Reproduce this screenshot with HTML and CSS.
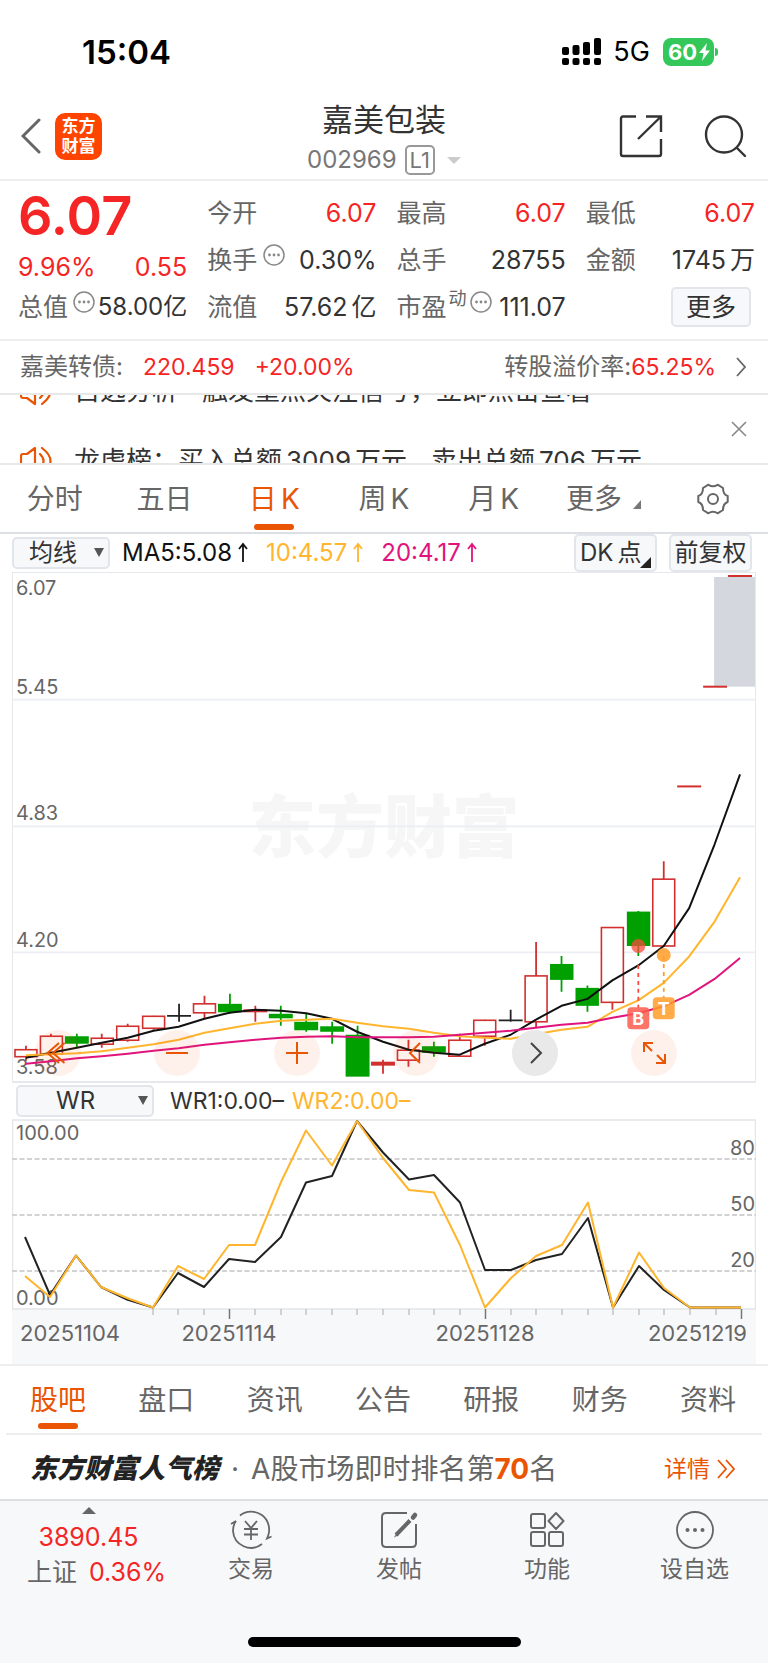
FILE: index.html
```html
<!DOCTYPE html>
<html lang="zh-CN">
<head>
<meta charset="utf-8">
<meta name="viewport" content="width=device-width, initial-scale=1">
<title>嘉美包装 002969</title>
<link rel="stylesheet" href="styles.css">
</head>
<body>
<svg class="defs" width="0" height="0" aria-hidden="true">
  <symbol id="more" viewBox="0 0 22 22"><circle cx="11" cy="11" r="10" fill="none" stroke="#888" stroke-width="1.5"/><g fill="#888"><circle cx="6.5" cy="11" r="1.4"/><circle cx="11" cy="11" r="1.4"/><circle cx="15.500" cy="11" r="1.4"/></g></symbol>
  <symbol id="speaker" viewBox="0 0 34 30"><path d="M15 2 7 8H3q-2 0-2 2v10q0 2 2 2h4l8 6zM20 8q7 7 0 14M22 2q17 13 0 26" fill="none" stroke="#ea5504" stroke-width="2.2" stroke-linejoin="round" stroke-linecap="round"/></symbol>
</svg>

<div class="status">
  <time class="clock">15:04</time>
  <div class="signals">
    <svg width="39" height="28" viewBox="0 0 39 28"><g fill="#000"><rect x="0" y="9" width="7" height="8" rx="2"/><rect x="10.500" y="7" width="7" height="10" rx="2"/><rect x="21" y="4" width="7" height="13" rx="2"/><rect x="32" y="0" width="7" height="17" rx="2"/><rect x="0" y="20" width="7" height="7" rx="2"/><rect x="10.500" y="20" width="7" height="7" rx="2"/><rect x="21" y="20" width="7" height="7" rx="2"/><rect x="32" y="20" width="7" height="7" rx="2"/></g></svg>
    <span class="net">5G</span>
    <span class="battery">60<svg width="11" height="18" viewBox="0 0 11 18"><path d="M8 0 0 10h4.500L3 18l8-10.500H6.500z" fill="#fff"/></svg></span>
  </div>
</div>

<header class="head">
  <div class="head-left">
    <button class="plain" aria-label="返回"><svg width="20" height="36" viewBox="0 0 20 36"><path d="M18 2 2 18l16 16" fill="none" stroke="#666" stroke-width="3" stroke-linecap="round"/></svg></button>
    <a href="#" class="brand"><span>东方</span><span>财富</span></a>
  </div>
  <div class="head-title">
    <h1>嘉美包装</h1>
    <div class="code"><span>002969</span><span class="level">L1</span><i class="caret"></i></div>
  </div>
  <div class="head-right">
    <button class="plain" aria-label="分享"><svg width="44" height="44" viewBox="0 0 44 44"><g fill="none" stroke="#333" stroke-width="2.400"><path d="M17 2.500H4q-2 0-2 2V40q0 2 2 2h36q2 0 2-2V25M27 2.500h15V18M42 2.500 19 25"/></g></svg></button>
    <button class="plain" aria-label="搜索"><svg width="44" height="44" viewBox="0 0 44 44"><g fill="none" stroke="#333" stroke-width="2.400" stroke-linecap="round"><circle cx="21" cy="20.500" r="18"/><path d="m34 34 8 8"/></g></svg></button>
  </div>
</header>

<section class="quote">
  <div class="col first">
    <div class="price">6.07</div>
    <div class="row change up"><span>9.96%</span><span>0.55</span></div>
    <div class="row"><span class="k">总值<svg class="hint"><use href="#more"/></svg></span><span class="tight">58.00<b class="u">亿</b></span></div>
  </div>
  <div class="col">
    <div class="row"><span class="k">今开</span><span class="up">6.07</span></div>
    <div class="row"><span class="k">换手<svg class="hint"><use href="#more"/></svg></span><span>0.30%</span></div>
    <div class="row"><span class="k">流值</span><span>57.62<b class="u">亿</b></span></div>
  </div>
  <div class="col">
    <div class="row"><span class="k">最高</span><span class="up">6.07</span></div>
    <div class="row"><span class="k">总手</span><span>28755</span></div>
    <div class="row"><span class="k">市盈<sup>动</sup><svg class="hint"><use href="#more"/></svg></span><span>111.07</span></div>
  </div>
  <div class="col">
    <div class="row"><span class="k">最低</span><span class="up">6.07</span></div>
    <div class="row"><span class="k">金额</span><span>1745<b class="u">万</b></span></div>
    <div class="row end"><button class="more-btn">更多</button></div>
  </div>
</section>

<a href="#" class="bond">
  <span class="name">嘉美转债:</span><span class="up">220.459</span><span class="up">+20.00%</span>
  <span class="premium">转股溢价率:<span class="up">65.25%</span></span>
  <svg width="12" height="20" viewBox="0 0 12 20"><path d="m2 1 8 9-8 9" fill="none" stroke="#666" stroke-width="1.800"/></svg>
</a>

<section class="news">
  <div class="ticker">
    <a href="#" class="item"><svg width="34" height="30"><use href="#speaker"/></svg><span>自选分析</span><span>触发重点关注信号，立即点击查看</span></a>
    <a href="#" class="item"><svg width="34" height="30"><use href="#speaker"/></svg><span>龙虎榜：买入总额<b class="u">3009</b><b class="u">万元</b></span><span>卖出总额<b class="u">706</b><b class="u">万元</b></span></a>
  </div>
  <button class="plain" aria-label="关闭"><svg width="16" height="16" viewBox="0 0 16 16"><path d="m1 1 14 14M15 1 1 15" stroke="#888" stroke-width="1.600"/></svg></button>
</section>

<nav class="periods">
  <a href="#">分时</a><a href="#">五日</a><a href="#" class="on">日<b class="u">K</b></a><a href="#">周<b class="u">K</b></a><a href="#">月<b class="u">K</b></a>
  <a href="#">更多<i class="corner"></i></a>
  <button class="plain" aria-label="设置"><svg width="32" height="32" viewBox="0 0 32 32"><g fill="none" stroke="#666" stroke-width="2" stroke-linejoin="round"><path d="M30.700 13V19Q26 20.500 26 27L20.600 30.300Q16 27 11.400 30.300L6 27Q6 20.500 1.300 19V13Q6 11.500 6 5L11.400 1.700Q16 5 20.600 1.700L26 5Q26 11.500 30.700 13z"/><circle cx="16" cy="16" r="5"/></g></svg></button>
</nav>

<div class="bar">
  <label class="pick"><select aria-label="主图指标"><option>均线</option></select></label>
  <span class="ma ma5">MA5:5.08<svg class="arr"><path d="M5 20V2M1 7l4-5 4 5"/></svg></span>
  <span class="ma ma10">10:4.57<svg class="arr"><path d="M5 20V2M1 7l4-5 4 5"/></svg></span>
  <span class="ma ma20">20:4.17<svg class="arr"><path d="M5 20V2M1 7l4-5 4 5"/></svg></span>
  <div class="bar-right"><button class="chip dk">DK<b class="u">点</b><i class="corner dark"></i></button><button class="chip">前复权</button></div>
</div>

<section class="kline">
  <svg class="chart" viewBox="12 573 744 509" role="img" aria-label="日K线">
    <text class="mark" x="248" y="853">东方财富</text>
    <path class="grid" d="M12 700h744M12 827h744M12 953.500h744"/>
    <rect x="715" y="577" width="41" height="110" fill="#d4d8de"/>
    <g class="red-line"><path d="M25 1047V1062M50 1035v5M101 1035v14M127 1025v18M153 1017v14M204 997v23M255 1007v16M383 1061v14M408.500 1041v27M460 1035v7M485 1021v26M536.500 943v86M613 928v83M664.500 862v20"/></g>
    <g class="hollow"><rect x="14" y="1051" width="22" height="7"/><rect x="39.500" y="1037.500" width="22" height="18"/><rect x="90.500" y="1039.500" width="22" height="6"/><rect x="116" y="1027.500" width="22" height="14"/><rect x="142" y="1017.500" width="22" height="12"/><rect x="193" y="1005" width="22" height="9"/><rect x="397.500" y="1051.500" width="22" height="10"/><rect x="449" y="1041.500" width="22" height="16"/><rect x="474" y="1021.500" width="22" height="16"/><rect x="525.500" y="977" width="22" height="46"/><rect x="602" y="928.500" width="22" height="75"/><rect x="653.500" y="880" width="22" height="67"/></g>
    <g fill="#d22f2f"><rect x="243" y="1010.500" width="24" height="3"/><rect x="371" y="1063" width="24" height="4"/><rect x="678" y="786" width="24" height="2"/><rect x="704" y="686" width="24" height="2"/><rect x="729" y="575" width="24" height="2"/></g>
    <path class="green-line" d="M76 1035v14M229.500 995v20M280.500 1007v20M306 1015v18M332 1023v22M357.500 1027v20M434 1043v15M562 957v36M588 986.500v26.500M639 912v45"/>
    <g fill="#00a000"><rect x="64" y="1037.500" width="24" height="7.500"/><rect x="217.500" y="1005" width="24" height="8.500"/><rect x="268.500" y="1015" width="24" height="4.500"/><rect x="294" y="1023" width="24" height="8.500"/><rect x="320" y="1027.500" width="24" height="5.500"/><rect x="345.500" y="1036" width="24" height="42"/><rect x="422" y="1047.500" width="24" height="6.500"/><rect x="550.500" y="965" width="23.500" height="16"/><rect x="576" y="989" width="23.500" height="18"/><rect x="627.500" y="912.500" width="23.500" height="34.500"/></g>
    <path d="M166.500 1017h24M178.500 1005v18M499 1021.500h24M511 1011v12" stroke="#222" stroke-width="1.800" fill="none"/>
    <g class="axis"><text x="15" y="595">6.07</text><text x="15" y="694">5.45</text><text x="15" y="821">4.83</text><text x="15" y="948">4.20</text><text x="15" y="1075">3.58</text></g>
    <g class="line"><path stroke="#111" d="M25 1059 50 1054 76 1049 101 1044 127 1039 153 1032 178 1028 204 1020 229 1014 255 1011 281 1012 306 1014.500 332 1020 357 1033 383 1043 409 1051 434 1054 460 1056 485 1045 511 1036 536 1021 562 1007 588 1000 613 981.500 639 966.500 664.500 947 690 909 715.500 845 741 775"/>
    <path stroke="#ffb52e" d="M25 1056.500 50 1055.500 76 1054.500 101 1052.500 127 1049 153 1045.500 178 1041 204 1034 229 1029.500 255 1025 281 1022 306 1021 332 1020 357 1024 383 1027.500 409 1030 434 1034 460 1037.500 485 1039 511 1040 536 1035.500 562 1031 588 1028 613 1013 639 1001.500 664.500 984 690 957.500 715.500 922.500 741 878"/>
    <path stroke="#e0147c" d="M25 1065 50 1062.500 76 1059.500 101 1057.500 127 1055 153 1052 178 1049.500 204 1046 229 1043.500 255 1041 281 1039 306 1038 332 1037.500 357 1038.500 383 1038.500 409 1038.500 434 1038 460 1036 485 1034 511 1032 536 1029 562 1026 588 1024 613 1019 639 1014.500 664.500 1007.500 690 996 715.500 980 741 959"/></g>
    <g fill="none" stroke-width="1.800" stroke-dasharray="4 4"><path d="M639 966v43" stroke="#fb4a3c"/><path d="M664.500 957v42" stroke="#ff9d28"/></g>
    <circle cx="639" cy="947" r="7" fill="#fb4a3c" fill-opacity=".75"/><circle cx="664.500" cy="956" r="7" fill="#ff9d28" fill-opacity=".85"/>
    <rect x="628" y="1008.500" width="22" height="22" rx="4" fill="#fb5a4c" fill-opacity=".85"/><rect x="653.500" y="998.500" width="22" height="22" rx="4" fill="#ff9d28" fill-opacity=".85"/>
    <g class="tag"><text x="639" y="1026">B</text><text x="664.500" y="1016">T</text></g>
  </svg>
  <div class="tools">
    <button aria-label="最左"><svg viewBox="0 0 46 46"><path d="M24 13 12.500 23 24 33M29.500 13 18 23l11.500 10"/></svg></button>
    <button aria-label="缩小"><svg viewBox="0 0 46 46"><path d="M12 23h22"/></svg></button>
    <button aria-label="放大"><svg viewBox="0 0 46 46"><path d="M12 23h22M23 12v22"/></svg></button>
    <button aria-label="左移"><svg viewBox="0 0 46 46"><path d="m27 13-10 10 10 10"/></svg></button>
    <button aria-label="右移" class="grey"><svg viewBox="0 0 46 46"><path d="m19 13 10 10-10 10"/></svg></button>
    <button aria-label="全屏"><svg viewBox="0 0 46 46"><path d="M13 22v-9h9M13 13l8 8M34 24v9h-9M34 33l-8-8"/></svg></button>
  </div>
</section>

<div class="bar sub">
  <label class="pick wide"><select aria-label="副图指标"><option>WR</option></select></label>
  <span class="wr1">WR1:0.00–</span><span class="wr2">WR2:0.00–</span>
</div>

<section class="wr">
  <svg class="chart" viewBox="12 1119 744 245" role="img" aria-label="WR指标">
    <rect x="12" y="1309" width="744" height="55" fill="#f7f8fa"/>
    <path d="M12.500 1120v189h743v-189z" fill="none" stroke="#e3e5e8" stroke-width="1.500"/>
    <path d="M12 1159h744M12 1215h744M12 1271h744" stroke="#d2d2d2" stroke-width="2" stroke-dasharray="5 2.500"/>
    <g class="axis"><text x="16" y="1140">100.00</text><text x="16" y="1305">0.00</text></g>
    <g class="axis right"><text x="755" y="1155">80</text><text x="755" y="1211">50</text><text x="755" y="1267">20</text></g>
    <g class="line"><path stroke="#222" d="M25 1237 50 1295 76 1255.500 101 1287 127 1299.500 153 1307.500 178 1273 204 1287 229 1259 255 1262 281 1237 306 1182.500 332 1176 357 1121 383 1152.500 409 1179.500 434 1175 460 1202.500 485 1270 511 1270 536 1260 562 1254 588 1218 613 1307.500 639 1266 664 1290 690 1307.500H741"/>
    <path stroke="#ffb52e" d="M25 1276 50 1297 76 1255.500 101 1287 127 1298 153 1307.500 178 1266 204 1279 229 1245 255 1245 281 1182 306 1130.500 332 1165.500 357 1121 383 1158 409 1190 434 1192.500 460 1245 485 1307.500 511 1278 536 1256 562 1245 588 1202.500 613 1307.500 639 1252.500 664 1288 690 1307.500H741"/></g>
    <path d="M153 1309v6M178 1309v6M204 1309v6M255 1309v6M281 1309v6M306 1309v6M332 1309v6M357 1309v6M383 1309v6M409 1309v6M434 1309v6M460 1309v6M511 1309v6M536 1309v6M562 1309v6M588 1309v6M613 1309v6M639 1309v6M664 1309v6M690 1309v6M716 1309v6" stroke="#aaa"/>
    <path d="M229.500 1309v10M485.500 1309v10M741.500 1309v10" stroke="#777" stroke-width="1.500"/>
    <g class="dates"><text x="20" y="1341">20251104</text><text x="229" y="1341" text-anchor="middle">20251114</text><text x="485" y="1341" text-anchor="middle">20251128</text><text x="747" y="1341" text-anchor="end">20251219</text></g>
  </svg>
</section>

<nav class="tabs"><a href="#" class="on">股吧</a><a href="#">盘口</a><a href="#">资讯</a><a href="#">公告</a><a href="#">研报</a><a href="#">财务</a><a href="#">资料</a></nav>

<a href="#" class="rank">
  <em>东方财富人气榜</em><span class="dot">·</span><span>A股市场即时排名第<strong>70</strong>名</span>
  <span class="detail">详情<svg width="20" height="20" viewBox="0 0 20 20"><path d="m2 1 8 9-8 9M10 1l8 9-8 9" fill="none" stroke="#ea5504" stroke-width="1.800"/></svg></span>
</a>

<footer class="dock">
  <div class="dock-row">
    <a href="#" class="index"><i class="tri"></i><span class="up">3890.45</span><span class="pair">上证<span class="up">0.36%</span></span></a>
    <a href="#"><svg width="44" height="40" viewBox="0 0 44 40"><g fill="none" stroke="#666" stroke-width="1.800"><path d="M11 5.500A18 18 0 0 1 39 26l-1 2.500 4.500-2M33 34A18 18 0 0 1 4 21Q4 15 7 11l-5 3"/><path d="m16 11 6 7 6-7M15 19h14M15 24.500h14M22 18v12"/></g></svg>交易</a>
    <a href="#"><svg width="40" height="40" viewBox="0 0 40 40"><path d="M28 3H7Q3 3 3 7v26q0 4 4 4h26q4 0 4-4V14" fill="none" stroke="#666" stroke-width="2"/><path d="M17 25 31 10.500" stroke="#666" stroke-width="4"/><path d="M18 22.500 15 27.500 20 25z" fill="#666"/><path d="m34 7.500 2-2.500" stroke="#666" stroke-width="4.500" stroke-linecap="round"/></svg>发帖</a>
    <a href="#"><svg width="40" height="40" viewBox="0 0 40 40"><g fill="none" stroke="#666" stroke-width="2"><rect x="4" y="4" width="14" height="14" rx="2"/><rect x="4" y="22" width="14" height="14" rx="2"/><rect x="22" y="22" width="14" height="14" rx="2"/><path d="m29 3 7.500 8L29 19l-7.500-8z" stroke-linejoin="round"/></g></svg>功能</a>
    <a href="#"><svg width="40" height="40" viewBox="0 0 40 40"><circle cx="20" cy="20" r="18" fill="none" stroke="#666" stroke-width="1.800"/><g fill="#666"><circle cx="12.500" cy="20" r="2"/><circle cx="20" cy="20" r="2"/><circle cx="27.500" cy="20" r="2"/></g></svg>设自选</a>
  </div>
  <div class="home"></div>
</footer>
</body>
</html>
```
FILE: styles.css
```css
* { box-sizing: border-box; }
body {
  margin: 0;
  background: #fff;
  color: #333;
  font: 24px/32px Inter, "Noto Sans CJK SC", sans-serif;
}
a { color: inherit; text-decoration: none; }
button, select { font: inherit; color: inherit; }
svg { display: block; flex: none; }
.defs { position: absolute; }
.plain { display: block; padding: 0; border: 0; background: none; }
.u { font-weight: inherit; margin-left: 4px; }
.up { color: #f52525; }

.status { display: flex; justify-content: space-between; align-items: center; height: 103px; padding: 0 54px 0 82px; }
.clock { color: #000; font-size: 33px; font-weight: 600; }
.signals { display: flex; align-items: center; color: #000; }
.net { margin: 0 13px 0 12px; font-size: 27px; }
.battery {
  position: relative;
  display: flex; align-items: center; gap: 2px;
  height: 28px; padding: 0 4px 0 5px;
  border-radius: 8px; background: #34c759; color: #fff;
  font-size: 22px; font-weight: 700;
}
.battery::after { content: ""; position: absolute; right: -4px; top: 10px; width: 3px; height: 8px; border-radius: 0 3px 3px 0; background: #34c759; }

.head { display: grid; grid-template-columns: 1fr auto 1fr; height: 78px; padding: 0 21px; border-bottom: 2px solid #eee; }
.head-left, .head-right { display: flex; align-items: center; padding-bottom: 10px; }
.head-left { gap: 14px; }
.head-right { justify-content: flex-end; gap: 40px; }
.brand {
  display: flex; flex-direction: column; justify-content: center;
  width: 47px; height: 47px; border-radius: 10px;
  background: #ff4400; color: #fff; text-align: center;
  font-size: 17px; font-weight: 700; line-height: 20px;
}
.head-title { text-align: center; }
h1 { margin: 0; font-size: 31px; font-weight: 400; line-height: 34px; }
.code { display: flex; align-items: center; justify-content: center; gap: 8px; padding-top: 7px; color: #777; font-size: 24px; }
.level { height: 30px; padding: 0 3px; border: 2px solid #999; border-radius: 5px; line-height: 26px; font-size: 22px; }
.caret { margin-left: 4px; border: 7px solid transparent; border-top-color: #ccc; border-bottom: 0; }

.quote { display: grid; grid-template-columns: repeat(4, 1fr); gap: 20px; padding: 8px 13px 9px 18px; border-bottom: 2px solid #eee; font-size: 25px; }
.row { display: flex; justify-content: space-between; align-items: center; height: 47px; white-space: nowrap; }
.k { display: flex; align-items: center; color: #666; }
.price { height: 54px; color: #f52525; font-size: 54px; font-weight: 600; line-height: 54px; }
.change { height: 40px; padding-top: 8px; }
.hint { width: 22px; height: 22px; margin: -10px 0 0 6px; }
.first .hint { margin: -10px 0 0 5px; }
.tight { font-size: 24px; }
.tight .u { margin-left: 0; }
sup { font-size: 18px; line-height: 18px; margin: -16px -3px 0 2px; }
.more-btn { height: 40px; width: 80px; margin-right: 4px; padding: 0; border: 2px solid #e2e5e9; border-radius: 5px; background: #f7f8fa; font-size: 25px; line-height: 32px; }
.end { justify-content: flex-end; }

.bond { display: flex; align-items: center; height: 54px; padding: 0 21px 0 20px; border-bottom: 2px solid #e8e8e8; color: #666; }
.bond .name { margin-right: 20px; }
.bond .up { font-size: 23px; }
.bond .up + .up { margin-left: 20px; }
.premium { margin: 0 19px 0 auto; }

.news { display: flex; justify-content: space-between; align-items: center; height: 70px; padding: 0 21px 0 20px; border-bottom: 2px solid #e8e8e8; overflow: hidden; }
.ticker { display: flex; flex-direction: column; gap: 36px; margin-bottom: 6px; }
.item { display: flex; align-items: center; gap: 20px; height: 34px; font-size: 26px; white-space: nowrap; }
.item span + span { margin-left: 4px; }

.periods { display: grid; grid-template-columns: repeat(7, 1fr); justify-items: center; align-items: center; height: 69px; border-bottom: 2px solid #dcdfe4; color: #666; font-size: 28px; }
.periods a, .tabs a { position: relative; }
.periods .on, .tabs .on { color: #ea5504; }
.on::after { content: ""; position: absolute; left: 50%; bottom: -15px; width: 40px; height: 6px; margin-left: -20px; border-radius: 3px; background: #ea5504; }
.corner { display: inline-block; margin-left: 11px; border-left: 8px solid transparent; border-bottom: 9px solid #777; }

.bar { display: flex; align-items: center; height: 38px; padding: 0 16px 0 12px; white-space: nowrap; }
.pick { position: relative; display: block; width: 98px; }
.pick::after { content: ""; position: absolute; right: 6px; top: 11px; border: 5px solid transparent; border-top: 9px solid #555; border-bottom: 0; }
.pick select { display: block; appearance: none; width: 100%; height: 32px; padding: 0 15px; border: 2px solid #e2e5e9; border-radius: 5px; background: #f7f8fa; line-height: 28px; }
.ma { display: flex; align-items: center; margin-left: 12px; }
.ma + .ma { margin-left: 18px; }
.arr { width: 10px; height: 22px; margin-left: 6px; fill: none; stroke: currentColor; stroke-width: 1.8; }
.ma5 { color: #111; }
.ma10, .wr2 { color: #ffb52e; }
.ma20 { color: #e0147c; }
.bar-right { display: flex; gap: 12px; margin-left: auto; }
.chip { position: relative; height: 38px; width: 83px; padding: 0; border: 2px solid #e2e5e9; border-radius: 5px; background: #f7f8fa; line-height: 32px; }
.dk { text-align: left; padding-left: 4px; }
.dark { position: absolute; right: 4px; bottom: 2px; border-left-width: 11px; border-bottom: 11px solid #222; }

.kline { position: relative; margin: 0 12px; border: 1px solid #e6e8eb; border-bottom-width: 2px; }
.chart { width: 100%; height: auto; }
.grid { fill: none; stroke: #eceef3; stroke-width: 1.8; }
.mark { fill: #f6f6f6; font-size: 68px; font-weight: 900; }
.axis { fill: #666; font-size: 20px; }
.right { text-anchor: end; }
.dates { fill: #666; font-size: 22px; }
.red-line { stroke: #d22f2f; stroke-width: 1.8; }
.hollow { fill: #fff; stroke: #d22f2f; stroke-width: 1.6; }
.green-line { stroke: #00a000; stroke-width: 1.8; }
.line { fill: none; stroke-width: 2; stroke-linejoin: round; }
.tag { fill: #fff; font-size: 18px; font-weight: 700; text-anchor: middle; }
.tools { position: absolute; left: 3%; right: 10.500%; bottom: 5px; display: flex; justify-content: space-between; }
.tools button { width: 46px; height: 46px; padding: 0; border: 0; border-radius: 50%; background: rgba(240, 80, 10, .08); }
.tools svg { fill: none; stroke: #ea5504; stroke-width: 2; }
.tools .grey { background: #e9e9e9; }
.tools .grey svg { stroke: #444; }

.sub { height: 36px; padding-left: 16px; }
.wide { width: 138px; }
.pick.wide select { padding-left: 38px; }
.sub span { font-size: 23px; }
.wr1 { margin-left: 16px; }
.wr2 { margin-left: 8px; }
.wr { padding: 0 12px; }

.tabs { display: flex; justify-content: space-between; align-items: center; height: 69px; padding: 2px 32px 0 30px; border-top: 2px solid #eee; color: #666; font-size: 28px; }
.tabs .on::after { bottom: -13px; }
.rank { display: flex; align-items: center; height: 66px; margin: 0 6px; padding: 4px 26px 0 24px; border-top: 2px solid #eee; color: #666; font-size: 28px; white-space: nowrap; }
.rank em { color: #222; font-weight: 900; font-size: 27px; }
.dot { margin: 0 12px; }
.rank strong { color: #ea5504; font-weight: 700; }
.detail { display: flex; align-items: center; gap: 6px; margin-left: auto; color: #ea5504; font-size: 23px; }

.dock { height: 165px; border-top: 2px solid #dcdfe2; background: #f7f8fa; color: #666; font-size: 23px; }
.dock-row { display: grid; grid-template-columns: 177fr 148fr 148fr 148fr 147fr; height: 136px; }
.dock a { display: flex; flex-direction: column; align-items: center; gap: 3px; padding-top: 9px; }
.dock .index { gap: 3px; padding-top: 6px; font-size: 25px; }
.tri { margin-bottom: 4px; border: 7px solid transparent; border-bottom-color: #666; border-top: 0; }
.pair { display: flex; gap: 12px; padding-left: 16px; }
.home { width: 273px; height: 10px; margin: 0 auto; border-radius: 5px; background: #000; }
```
